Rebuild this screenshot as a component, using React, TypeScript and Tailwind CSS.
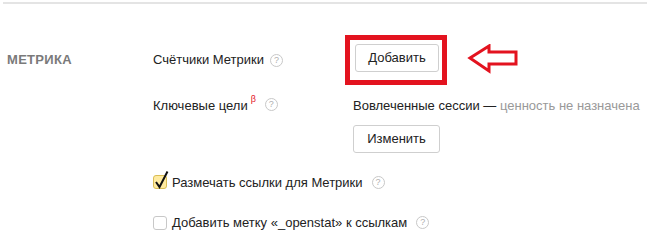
import React from 'react';

function Help({ className = '' }: { className?: string }) {
  return (
    <span
      className={`inline-flex h-[13px] w-[13px] items-center justify-center rounded-full border border-[#c8c8c8] text-[9px] leading-none text-[#b0b0b0] ${className}`}
    >
      ?
    </span>
  );
}

function Arrow() {
  return (
    <svg width="52" height="30" viewBox="0 0 52 30" className="block">
      <path
        d="M3 14 L22 2 L22 8 L49 8 L49 20 L22 20 L22 27 Z"
        fill="none"
        stroke="#e3131f"
        strokeWidth="3"
        strokeLinejoin="miter"
      />
    </svg>
  );
}

function Checkbox({ checked }: { checked?: boolean }) {
  return (
    <span
      className={`relative inline-block h-[14px] w-[14px] shrink-0 rounded-[3px] border ${
        checked ? 'border-[#d9bd55] bg-[#ffeba0]' : 'border-[#c8c8c8] bg-white'
      }`}
    >
      {checked && (
        <svg width="18" height="20" viewBox="0 0 18 20" className="absolute left-[-1px] top-[-6px]">
          <path d="M3 12 L6.5 17 L14.5 1.5" fill="none" stroke="#111" strokeWidth="2" />
        </svg>
      )}
    </span>
  );
}

export default function App() {
  return (
    <div className="h-[235px] w-[647px] overflow-hidden bg-white pt-[2px] font-['Liberation_Sans',Arial,sans-serif] text-[13px] text-[#222]">
      <div className="ml-[3px] border-t-2 border-[#e4e4e4]" />

      <div className="flex">
        {/* Section title */}
        <div className="w-[153px] shrink-0 pl-[7px] pt-[46px] text-[13px] font-bold tracking-[0.3px] text-[#7a7a7a]">
          МЕТРИКА
        </div>

        <div className="flex flex-col">
          {/* Счётчики */}
          <div className="flex items-center pt-[31px]">
            <div className="flex w-[192px] items-center gap-[6px]">
              <span>Счётчики Метрики</span>
              <Help />
            </div>
            <div className="border-[5px] border-[#e3131f] pb-[8px] pl-[5px] pr-[3px] pt-[4px]">
              <button className="h-[28px] w-[84px] rounded-[3px] border border-[#cfcfcf] bg-white text-[13px] text-[#222]">
                Добавить
              </button>
            </div>
            <div className="ml-[20px] mb-[2px]">
              <Arrow />
            </div>
          </div>

          {/* Ключевые цели */}
          <div className="flex pt-[11px]">
            <div className="flex w-[200px] items-start gap-[3px]">
              <span>Ключевые цели</span>
              <span className="mt-[-3px] text-[9px] text-[#e3131f]">β</span>
              <Help className="ml-[6px] mt-[2px]" />
            </div>
            <div className="flex flex-col items-start">
              <div>
                Вовлеченные сессии — <span className="text-[#999]">ценность не назначена</span>
              </div>
              <button className="mt-[9px] h-[28px] w-[87px] rounded-[3px] border border-[#cfcfcf] bg-white text-[13px] text-[#222]">
                Изменить
              </button>
            </div>
          </div>
        </div>
      </div>

      {/* Checkboxes */}
      <div className="ml-[153px] mt-[20px] flex flex-col gap-[21px]">
        <label className="flex items-center gap-[5px]">
          <Checkbox checked />
          <span>Размечать ссылки для Метрики</span>
          <Help className="ml-[4px]" />
        </label>
        <label className="flex items-center gap-[5px]">
          <Checkbox />
          <span>Добавить метку «_openstat» к ссылкам</span>
          <Help className="ml-[4px]" />
        </label>
      </div>
    </div>
  );
}
